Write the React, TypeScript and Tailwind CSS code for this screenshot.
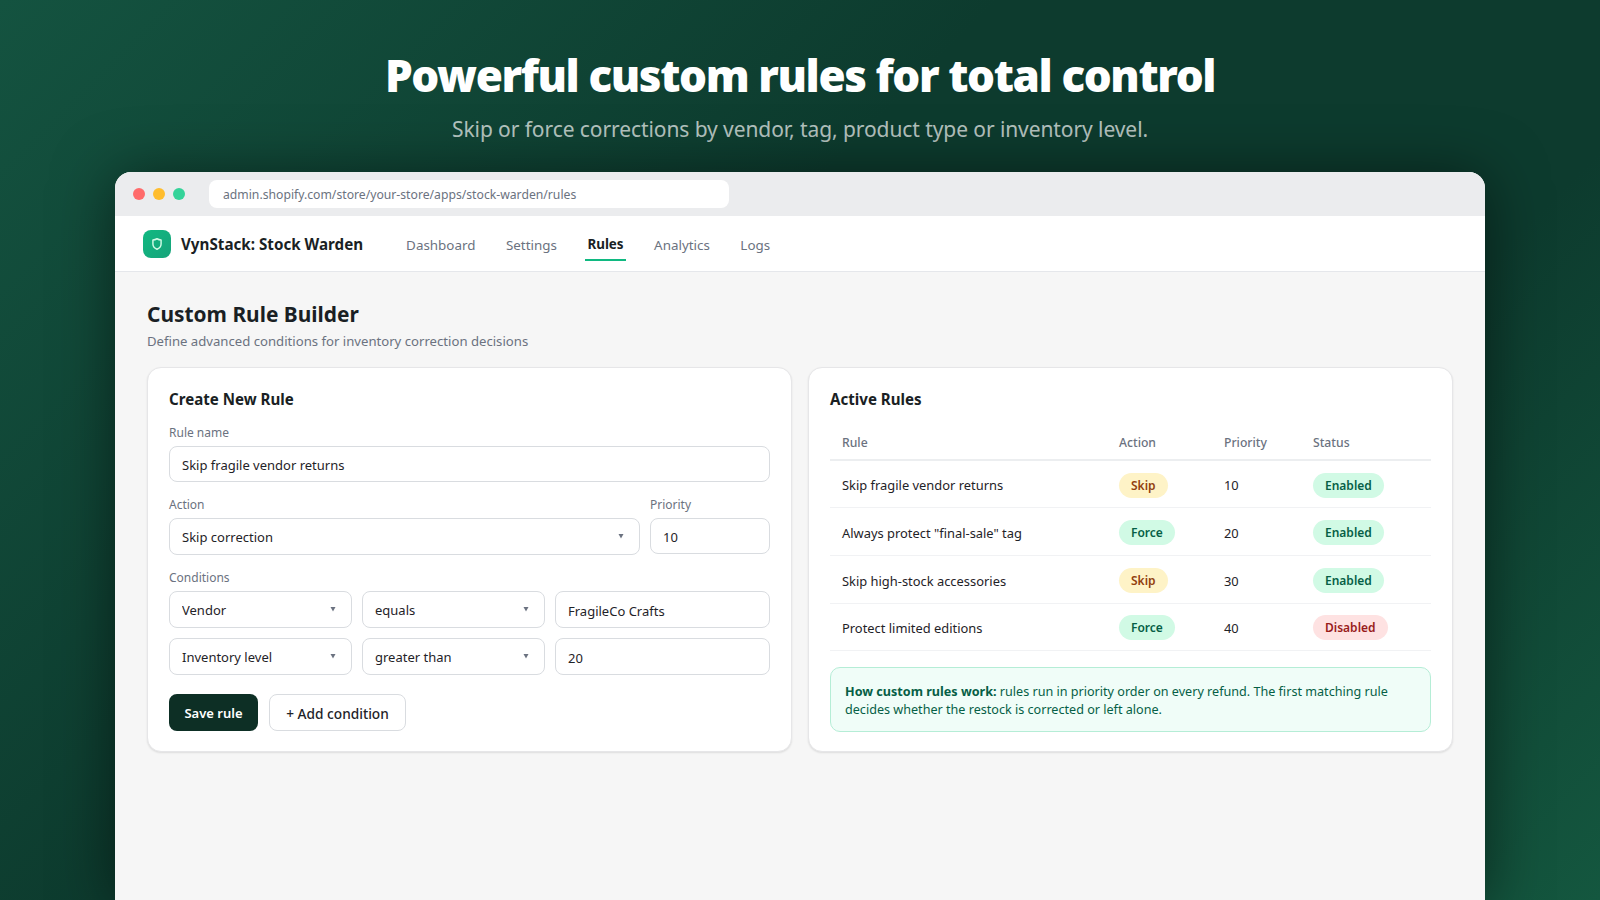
import React from "react";

function Arrow() {
  return (
    <svg className="absolute right-[16px] top-[15px] pointer-events-none" width="6" height="6" viewBox="0 0 6 6">
      <path d="M0.500 1h5L3 5.500z" fill="#6b7280" />
    </svg>
  );
}

function Sel({ value, className = "" }: { value: string; className?: string }) {
  return (
    <div className={`relative h-[37px] ${className}`}>
      <select
        defaultValue={value}
        className="h-full w-full appearance-none rounded-lg border border-[#d9dce0] bg-white px-3 pt-[3px] text-[13px] text-[#1f2328] outline-none"
      >
        <option>{value}</option>
      </select>
      <Arrow />
    </div>
  );
}

function Inp({ value, className = "" }: { value: string; className?: string }) {
  return (
    <input
      readOnly
      value={value}
      className={`block rounded-lg border border-[#d9dce0] bg-white px-3 pt-[2px] text-[13px] text-[#1f2328] outline-none ${className}`}
    />
  );
}

function Label({ children }: { children: React.ReactNode }) {
  return <div className="mb-[5px] text-[12px] leading-[17px] text-[#6b7280]">{children}</div>;
}

function Badge({ text, tone }: { text: string; tone: "skip" | "ok" | "off" }) {
  const c =
    tone === "skip"
      ? "bg-[#fef3c7] text-[#92400e]"
      : tone === "ok"
        ? "bg-[#d1fae5] text-[#065f46]"
        : "bg-[#fee2e2] text-[#991b1b]";
  return (
    <span className={`inline-block rounded-full px-3 py-[4px] text-[12px] font-semibold leading-[17px] ${c}`}>{text}</span>
  );
}

const rows: [string, string, "skip" | "ok", string, string, "ok" | "off"][] = [
  ["Skip fragile vendor returns", "Skip", "skip", "10", "Enabled", "ok"],
  ['Always protect "final-sale" tag', "Force", "ok", "20", "Enabled", "ok"],
  ["Skip high-stock accessories", "Skip", "skip", "30", "Enabled", "ok"],
  ["Protect limited editions", "Force", "ok", "40", "Disabled", "off"],
];

export default function App() {
  return (
    <div
      className="flex h-[900px] w-full flex-col items-center overflow-hidden bg-[linear-gradient(135deg,#145340_0%,#0d3b2e_40%,#0d3b2e_70%,#14573f_100%)]"
      style={{ fontFamily: '"Noto Sans", sans-serif' }}
    >
      <h1 className="mt-[45px] text-[44px] font-black leading-[60px] tracking-[-1.400px] text-white">Powerful custom rules for total control</h1>
      <p className="mt-[9px] text-[21px] leading-[30px] tracking-[-0.08px] text-white/70">Skip or force corrections by vendor, tag, product type or inventory level.</p>
      <div className="mt-[28px] flex w-[1370px] flex-1 flex-col overflow-hidden rounded-t-[16px] bg-[#f6f6f6] shadow-[0_4px_60px_rgba(0,0,0,0.5)]">
        <div className="flex h-[44px] items-center bg-[#ebecee] pl-[18px]">
          <div className="flex gap-2">
            <span className="h-3 w-3 rounded-full bg-[#ff6b6b]" />
            <span className="h-3 w-3 rounded-full bg-[#ffbd2e]" />
            <span className="h-3 w-3 rounded-full bg-[#34d399]" />
          </div>
          <div className="ml-[24px] flex h-[28px] w-[520px] items-center rounded-lg bg-white px-[14px] pt-[3px] text-[12.200px] text-[#6b7280]">
            admin.shopify.com/store/your-store/apps/stock-warden/rules
          </div>
        </div>
        <div className="flex h-[56px] items-center border-b border-[#e5e7eb] bg-white pl-[28px]">
          <div className="flex h-7 w-7 items-center justify-center rounded-lg bg-gradient-to-br from-[#10b981] to-[#16a37a]">
            <svg width="14" height="14" viewBox="0 0 24 24" fill="none" stroke="#d1fae5" strokeWidth="2.5" strokeLinejoin="round">
              <path d="M5 5c2.500 0 5-.8 7-2 2 1.200 4.500 2 7 2v7c0 5-3.500 7.500-7 9-3.500-1.500-7-4-7-9z" />
            </svg>
          </div>
          <div className="ml-[10px] pt-[2px] text-[15.200px] font-bold text-[#1a1f24]">VynStack: Stock Warden</div>
          <nav className="ml-[41px] flex h-full items-center gap-[26.500px] pt-[4px] text-[13.400px] text-[#6b7280]">
            <span className="px-[2px]">Dashboard</span>
            <span className="px-[2px]">Settings</span>
            <span className="relative -top-[1px] px-[2px] font-bold text-[#1a1f24]">
              Rules
              <span className="absolute -bottom-[6px] left-0 h-[2px] w-full bg-[#10b981]" />
            </span>
            <span className="px-[2px]">Analytics</span>
            <span className="px-[2px]">Logs</span>
          </nav>
        </div>
        <div className="flex flex-col px-[32px] pt-[27px]">
          <h2 className="text-[20.900px] font-bold leading-[30px] text-[#1a1f24]">Custom Rule Builder</h2>
          <p className="mt-[3px] text-[13.150px] leading-[18px] text-[#6b7280]">Define advanced conditions for inventory correction decisions</p>
          <div className="mt-[17px] grid grid-cols-2 gap-4">
            <div className="h-[385px] rounded-[14px] border border-[#e6e6e8] bg-white px-[21px] pt-[21px] shadow-[0_1px_2px_rgba(0,0,0,0.1)]">
              <h3 className="text-[15.100px] font-bold leading-[21px] text-[#1a1f24]">Create New Rule</h3>
              <div className="mt-[14px]">
                <Label>Rule name</Label>
                <Inp value="Skip fragile vendor returns" className="h-[36px] w-full" />
              </div>
              <div className="mt-[14px] flex gap-[10px]">
                <div className="flex-1">
                  <Label>Action</Label>
                  <Sel value="Skip correction" />
                </div>
                <div className="w-[120px]">
                  <Label>Priority</Label>
                  <Inp value="10" className="h-[36px] w-full" />
                </div>
              </div>
              <div className="mt-[14px]">
                <Label>Conditions</Label>
                <div className="grid grid-cols-[183px_183px_1fr] gap-x-[10px] gap-y-[10px]">
                  <Sel value="Vendor" />
                  <Sel value="equals" />
                  <Inp value="FragileCo Crafts" className="h-[37px] w-full" />
                  <Sel value="Inventory level" />
                  <Sel value="greater than" />
                  <Inp value="20" className="h-[37px] w-full" />
                </div>
              </div>
              <div className="mt-[19px] flex items-center gap-[11px]">
                <button className="h-[37px] w-[89px] rounded-lg bg-[#0d2f25] pt-[2px] text-[13px] font-semibold text-white">Save rule</button>
                <button className="h-[37px] w-[137px] rounded-lg border border-[#d9dce0] bg-white pt-[3px] text-[13.700px] font-medium text-[#1f2328]">+ Add condition</button>
              </div>
            </div>
            <div className="h-[385px] rounded-[14px] border border-[#e6e6e8] bg-white px-[21px] pt-[21px] shadow-[0_1px_2px_rgba(0,0,0,0.1)]">
              <h3 className="text-[15.100px] font-bold leading-[21px] text-[#1a1f24]">Active Rules</h3>
              <table className="mt-[17px] w-full table-fixed border-collapse text-[12.900px] text-[#1f2328]">
                <colgroup>
                  <col className="w-[277px]" />
                  <col className="w-[105px]" />
                  <col className="w-[89px]" />
                  <col />
                </colgroup>
                <thead>
                  <tr className="h-[33px] border-b-2 border-[#eceef0] text-left text-[12.200px] text-[#6b7280]">
                    <th className="px-3 font-medium">Rule</th>
                    <th className="px-3 font-medium">Action</th>
                    <th className="px-3 font-medium">Priority</th>
                    <th className="px-3 font-medium">Status</th>
                  </tr>
                </thead>
                <tbody>
                  {rows.map((r) => (
                    <tr key={r[0]} className="h-[47.700px] border-b border-[#f1f2f4]">
                      <td className="px-3 pt-[4px]">{r[0]}</td>
                      <td className="px-3 pt-[2px]"><Badge text={r[1]} tone={r[2]} /></td>
                      <td className="px-3 pt-[4px]">{r[3]}</td>
                      <td className="px-3 pt-[2px]"><Badge text={r[4]} tone={r[5]} /></td>
                    </tr>
                  ))}
                </tbody>
              </table>
              <div className="mt-[16px] h-[65px] rounded-[10px] border border-[#b5edd6] bg-[#f0fdf8] px-[14px] pt-[15px] text-[12.600px] leading-[17.500px] text-[#065f46]">
                <strong className="font-bold">How custom rules work:</strong> rules run in priority order on every refund. The first matching rule decides whether the restock is corrected or left alone.
              </div>
            </div>
          </div>
        </div>
      </div>
    </div>
  );
}
